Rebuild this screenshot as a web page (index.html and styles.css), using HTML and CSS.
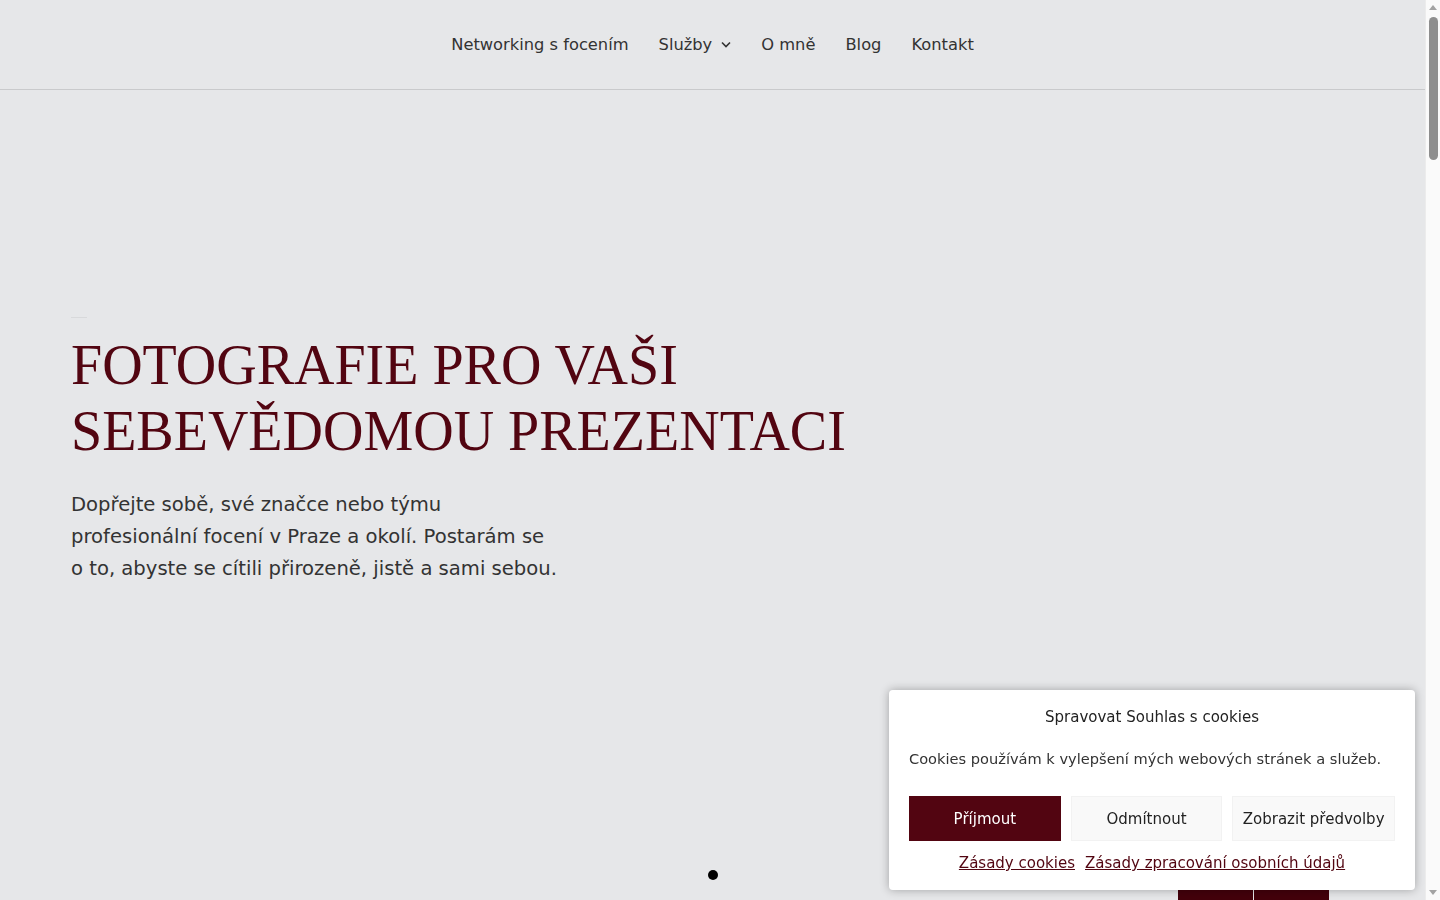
FILE: index.html
```html
<!DOCTYPE html>
<html lang="cs">
<head>
  <meta charset="UTF-8">
  <meta name="viewport" content="width=device-width, initial-scale=1.0">
  <title>Fotografie pro vaši sebevědomou prezentaci</title>
  <link rel="stylesheet" href="styles.css">
</head>
<body>
  <header class="site-header">
    <nav class="main-nav">
      <a href="#">Networking s focením</a>
      <a href="#" class="has-sub">Služby
        <svg class="caret" width="10" height="7" viewBox="0 0 10 7"><path d="M1 1.5l4 4 4-4" fill="none" stroke="#333" stroke-width="1.6"/></svg>
      </a>
      <a href="#">O mně</a>
      <a href="#">Blog</a>
      <a href="#">Kontakt</a>
    </nav>
  </header>

  <section class="hero">
    <div class="hero-inner">
      <span class="hero-rule"></span>
      <h1 class="hero-title">Fotografie pro vaši<br>sebevědomou prezentaci</h1>
      <p class="hero-text">Dopřejte sobě, své značce nebo týmu profesionální focení v Praze a okolí. Postarám se o to, abyste se cítili přirozeně, jistě a sami sebou.</p>
    </div>
    <div class="slider-dots"><span class="dot"></span></div>
  </section>

  <section class="next-section"></section>

  <div class="float-actions">
    <a href="#" class="float-btn"></a>
    <a href="#" class="float-btn"></a>
  </div>

  <div class="cookie-box">
    <div class="cookie-title">Spravovat Souhlas s cookies</div>
    <div class="cookie-message">Cookies používám k vylepšení mých webových stránek a služeb.</div>
    <div class="cookie-buttons">
      <button class="btn btn-accept">Příjmout</button>
      <button class="btn">Odmítnout</button>
      <button class="btn">Zobrazit předvolby</button>
    </div>
    <div class="cookie-links">
      <a href="#">Zásady cookies</a>
      <a href="#">Zásady zpracování osobních údajů</a>
    </div>
  </div>

  <!-- page scrollbar -->
  <div class="scrollbar">
    <span class="sb-arrow sb-up"></span>
    <span class="sb-thumb"></span>
    <span class="sb-arrow sb-down"></span>
  </div>
</body>
</html>
```

FILE: styles.css
```css
:root {
  --bg: #e6e7e9;
  --text: #2b2b2b;
  --wine: #520511;
  --body-font: "DejaVu Sans", "Open Sans", sans-serif;
}
* {
  box-sizing: border-box;
}
body {
  margin: 0 15px 0 0;
  background: var(--bg);
  color: var(--text);
  font-family: var(--body-font);
}
a {
  color: inherit;
  text-decoration: none;
}

/* header */
.site-header {
  height: 90px;
  border-bottom: 1px solid #c9cacc;
  display: flex;
  align-items: center;
  justify-content: center;
}
.main-nav {
  display: flex;
  gap: 30px;
  align-items: center;
  font-size: 16.3px;
  color: #333;
}
.main-nav a {
  display: flex;
  align-items: center;
  gap: 9px;
}

/* hero */
.hero {
  position: relative;
  height: 880px;
  padding: 227px 71px 0;
}
.hero-rule {
  display: block;
  width: 16px;
  height: 1px;
  background: #d8d9db;
  margin-bottom: 14px;
}
.hero-title {
  margin: 0;
  font-family: "Liberation Serif", "DejaVu Serif", serif;
  font-weight: 400;
  font-size: 56px;
  line-height: 66px;
  letter-spacing: 0;
  text-transform: uppercase;
  color: var(--wine);
}
.hero-text {
  margin: 25px 0 0;
  max-width: 490px;
  font-size: 19.6px;
  line-height: 32px;
  color: #333;
}
.slider-dots {
  position: absolute;
  left: 0;
  right: 0;
  top: 780px;
  display: flex;
  justify-content: center;
}
.dot {
  width: 10px;
  height: 10px;
  border-radius: 50%;
  background: #000;
}
.next-section {
  height: 600px;
  background: #fff;
}

/* floating buttons under the banner */
.float-actions {
  position: fixed;
  left: 1178px;
  bottom: -40px;
  display: flex;
  gap: 1px;
}
.float-btn {
  width: 75px;
  height: 52px;
  background: #43000b;
}

/* cookie banner */
.cookie-box {
  position: fixed;
  left: 889px;
  top: 690px;
  width: 526px;
  padding: 17px 20px 17px;
  background: #fff;
  border-radius: 4px;
  box-shadow: 0 0 10px rgba(0, 0, 0, 0.3);
  color: #222;
}
.cookie-title {
  text-align: center;
  font-size: 15px;
  font-weight: 500;
  line-height: 20px;
}
.cookie-message {
  margin-top: 22px;
  font-size: 14.6px;
  line-height: 20px;
  color: #333;
}
.cookie-buttons {
  display: flex;
  gap: 10px;
  margin-top: 27px;
}
.btn {
  flex: 1;
  height: 45px;
  border: 1px solid #f2f2f2;
  background: #f9f9f9;
  font-family: var(--body-font);
  font-size: 15px;
  color: #222;
  cursor: pointer;
}
.btn:last-child {
  flex: 1.08;
}
.btn-accept {
  background: var(--wine);
  border-color: var(--wine);
  color: #fff;
}
.cookie-links {
  margin-top: 12px;
  display: flex;
  justify-content: center;
  gap: 10px;
  font-size: 15px;
  line-height: 20px;
}
.cookie-links a {
  color: var(--wine);
  text-decoration: underline;
}

/* scrollbar */
.scrollbar {
  position: fixed;
  top: 0;
  right: 0;
  width: 15px;
  height: 100%;
  background: #fafafa;
  border-left: 1px solid #ececec;
}
.sb-thumb {
  position: absolute;
  left: 3px;
  top: 17px;
  width: 9px;
  height: 143px;
  border-radius: 5px;
  background: #8e8e8e;
}
.sb-arrow {
  position: absolute;
  left: 3px;
  width: 0;
  height: 0;
  border-left: 4px solid transparent;
  border-right: 4px solid transparent;
}
.sb-up {
  top: 5px;
  border-bottom: 5px solid #a3a3a3;
}
.sb-down {
  bottom: 5px;
  border-top: 5px solid #a3a3a3;
}
```
